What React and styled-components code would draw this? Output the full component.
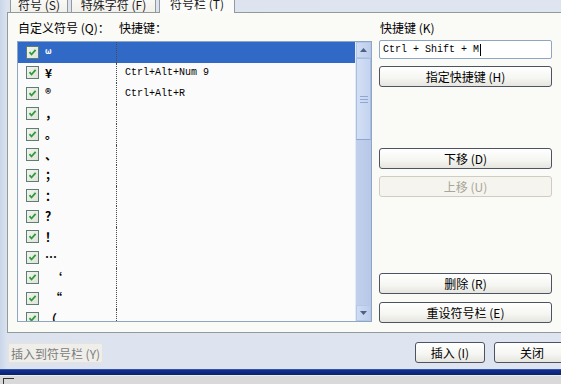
import React from 'react'
import styled, { createGlobalStyle } from 'styled-components'

const GlobalStyle = createGlobalStyle`
  html, body {
    margin: 0;
    padding: 0;
  }
  body {
    font-family: "Noto Sans CJK SC", "Liberation Sans", sans-serif;
    font-size: 12px;
    color: #000;
  }
`

const rows = [
  { sym: 'ω', small: true, key: '' },
  { sym: '¥', key: 'Ctrl+Alt+Num 9' },
  { sym: '®', key: 'Ctrl+Alt+R' },
  { sym: '，', key: '' },
  { sym: '。', key: '' },
  { sym: '、', key: '' },
  { sym: '；', key: '' },
  { sym: '：', key: '' },
  { sym: '？', key: '' },
  { sym: '！', key: '' },
  { sym: '…', key: '' },
  { sym: '‘', key: '', indent: true },
  { sym: '“', key: '', indent: true },
  { sym: '（', key: '' },
]

function Check() {
  return (
    <CheckBox>
      <svg width="9" height="9" viewBox="0 0 9 9">
        <polyline points="1.5,4.2 3.5,6.5 7.6,1.8" fill="none" stroke="#2f9b3a" strokeWidth="1.8" />
      </svg>
    </CheckBox>
  )
}

function Arrow({ down }) {
  return (
    <svg width="7" height="4" viewBox="0 0 7 4">
      <polygon points={down ? '0,0 7,0 3.5,4' : '0,4 7,4 3.5,0'} fill="#4d6185" />
    </svg>
  )
}

function App() {
  return (
    <>
      <GlobalStyle />
      <Window>
        <TabStrip>
          <Tab $w={58}>符号 (<u>S</u>)</Tab>
          <Tab $w={85}>特殊字符 (<u>F</u>)</Tab>
          <Tab $w={76} $active>符号栏 (<u>T</u>)</Tab>
        </TabStrip>

        <Panel>
          <LeftCol>
            <HeadRow>
              <HeadLabel $w={100}>自定义符号 (<u>Q</u>)：</HeadLabel>
              <HeadLabel>快捷键：</HeadLabel>
            </HeadRow>
            <ListBox>
              <Rows>
                {rows.map((r, i) => (
                  <Row key={i} $selected={i === 0}>
                    <SymCell>
                      <Check />
                      <Sym $small={r.small} $indent={r.indent}>{r.sym}</Sym>
                    </SymCell>
                    <KeyCell>{r.key}</KeyCell>
                  </Row>
                ))}
              </Rows>
              <ScrollBar>
                <ScrollBtn><Arrow /></ScrollBtn>
                <Thumb>
                  <Grip />
                  <Grip />
                  <Grip />
                </Thumb>
                <Track />
                <ScrollBtn><Arrow down /></ScrollBtn>
              </ScrollBar>
            </ListBox>
          </LeftCol>

          <RightCol>
            <HeadLabel>快捷键 (<u>K</u>)</HeadLabel>
            <KeyInput>Ctrl + Shift + M<Caret /></KeyInput>
            <Button $mt={7}>指定快捷键 (<u>H</u>)</Button>
            <Button $mt={61}>下移 (<u>D</u>)</Button>
            <Button $mt={7} $disabled>上移 (<u>U</u>)</Button>
            <Button $mt={76}>删除 (<u>R</u>)</Button>
            <Button $mt={8}>重设符号栏 (<u>E</u>)</Button>
          </RightCol>
        </Panel>

        <Footer>
          <FlatButton>插入到符号栏 (<u>Y</u>)</FlatButton>
          <FooterRight>
            <Button $w={70}>插入 (<u>I</u>)</Button>
            <Button $w={76} $cut>关闭</Button>
          </FooterRight>
        </Footer>

        <FrameBand />
        <StatusStrip>
          <StatusMark />
        </StatusStrip>
      </Window>
    </>
  )
}

const Window = styled.div`
  width: 561px;
  height: 384px;
  overflow: hidden;
  display: flex;
  flex-direction: column;
  background: linear-gradient(90deg, #c9d5ea 0px, #dce3ef 7px, #dfe5f0 100%);
`

const TabStrip = styled.div`
  height: 12px;
  display: flex;
  align-items: flex-end;
  padding-left: 10px;
  gap: 3px;
  position: relative;
  z-index: 2;
`

const Tab = styled.div`
  flex: none;
  width: ${p => p.$w}px;
  height: ${p => (p.$active ? 24 : 22)}px;
  margin-bottom: ${p => (p.$active ? -1 : 0)}px;
  box-sizing: border-box;
  border: 1px solid #919b9c;
  border-bottom: none;
  border-radius: 3px 3px 0 0;
  background: ${p => (p.$active ? '#fbfbf9' : 'linear-gradient(#ffffff, #f1f0ea)')};
  padding-top: 6px;
  line-height: 16px;
  text-align: center;
  color: #1a1a1a;
  white-space: nowrap;

  u {
    text-decoration: none;
  }
`

const Panel = styled.div`
  height: 321px;
  box-sizing: border-box;
  margin-left: 7px;
  border: 1px solid #919b9c;
  border-right: none;
  background: #fafaf7;
  padding: 8px 0 0 9px;
  display: flex;
  gap: 7px;
`

const LeftCol = styled.div`
  width: 355px;
  display: flex;
  flex-direction: column;
`

const HeadRow = styled.div`
  display: flex;
`

const HeadLabel = styled.div`
  ${p => (p.$w ? `width: ${p.$w}px;` : '')}
  line-height: 14px;
  height: 14px;
  padding-left: 1px;
  white-space: nowrap;

  u {
    text-decoration: none;
  }
`

const ListBox = styled.div`
  margin-top: 6px;
  height: 281px;
  box-sizing: border-box;
  border: 1px solid #8fa6c2;
  background: #fbfbfb;
  display: flex;
  overflow: hidden;
`

const Rows = styled.div`
  flex: 1;
  overflow: hidden;
`

const Row = styled.div`
  height: 20.5px;
  display: flex;
  background: ${p => (p.$selected ? '#3169c6' : 'transparent')};
  color: ${p => (p.$selected ? '#fff' : '#000')};
`

const SymCell = styled.div`
  width: 98px;
  display: flex;
  align-items: center;
  padding-left: 8px;
  box-sizing: border-box;
`

const CheckBox = styled.div`
  width: 13px;
  height: 13px;
  box-sizing: border-box;
  border: 1px solid #5d7f72;
  background: linear-gradient(135deg, #f2f4ef, #dfe3d9);
  display: flex;
  align-items: center;
  justify-content: center;
`

const Sym = styled.span`
  margin-left: ${p => (p.$indent ? 11 : 6)}px;
  font-weight: bold;
  font-size: ${p => (p.$small ? 8 : 12)}px;
  line-height: 12px;
  align-self: ${p => (p.$small ? 'flex-start' : 'center')};
  margin-top: ${p => (p.$small ? 3 : 0)}px;
`

const KeyCell = styled.div`
  flex: 1;
  border-left: 1px dotted #4a4a4a;
  padding-left: 8px;
  display: flex;
  align-items: center;
  font-family: "Liberation Mono", monospace;
  font-size: 10px;
  white-space: nowrap;
`

const ScrollBar = styled.div`
  width: 15px;
  flex: none;
  display: flex;
  flex-direction: column;
  background: #c3d2ee;
  border-left: 1px solid #e3e9f5;
`

const ScrollBtn = styled.div`
  height: 16px;
  flex: none;
  display: flex;
  align-items: center;
  justify-content: center;
  background: linear-gradient(90deg, #cfdcf3, #bccded);
  border: 1px solid #b5c6e6;
  box-sizing: border-box;
`

const Thumb = styled.div`
  height: 82px;
  flex: none;
  box-sizing: border-box;
  border: 1px solid #a9bde2;
  border-bottom-color: #8ea6d2;
  background: linear-gradient(90deg, #d3dff4, #c3d3f0);
  display: flex;
  flex-direction: column;
  align-items: center;
  justify-content: center;
  gap: 2px;
`

const Grip = styled.div`
  width: 8px;
  height: 1px;
  background: #90a7d3;
`

const Track = styled.div`
  flex: 1;
  background: linear-gradient(90deg, #c1d0ec, #b7c8e8);
`

const RightCol = styled.div`
  width: 173px;
  display: flex;
  flex-direction: column;
`

const KeyInput = styled.div`
  margin-top: 5px;
  height: 19px;
  box-sizing: border-box;
  border: 1px solid #8fa6c2;
  border-radius: 2px;
  background: #fff;
  font-family: "Liberation Mono", monospace;
  font-size: 10px;
  line-height: 17px;
  padding-left: 3px;
  display: flex;
  align-items: center;
  white-space: pre;
`

const Caret = styled.span`
  width: 1px;
  height: 12px;
  background: #000;
  margin-left: 1px;
`

const Button = styled.div`
  flex: none;
  margin-top: ${p => p.$mt || 0}px;
  ${p => (p.$w ? `width: ${p.$w}px;` : '')}
  ${p => (p.$cut ? 'margin-right: -9px;' : '')}
  height: 21px;
  box-sizing: border-box;
  border: 1px solid ${p => (p.$disabled ? '#cfcdc2' : '#4c5462')};
  border-radius: 3px;
  background: ${p =>
    p.$disabled
      ? '#f5f4ee'
      : 'linear-gradient(#ffffff 0%, #f5f5f1 60%, #e6e5df 100%)'};
  color: ${p => (p.$disabled ? '#a8a698' : '#000')};
  display: flex;
  align-items: center;
  justify-content: center;
  line-height: 14px;
  white-space: pre;

  u {
    text-decoration: none;
  }
`

const Footer = styled.div`
  height: 36px;
  box-sizing: border-box;
  padding: 9px 0 0 8px;
  display: flex;
  align-items: flex-start;
`

const FlatButton = styled.div`
  width: 95px;
  height: 20px;
  margin-top: 1px;
  box-sizing: border-box;
  border: 1px solid #e4e3dc;
  border-radius: 2px;
  background: #efeeea;
  color: #7d7d7a;
  display: flex;
  align-items: center;
  justify-content: center;
  white-space: pre;

  u {
    text-decoration: none;
  }
`

const FooterRight = styled.div`
  margin-left: auto;
  display: flex;
  gap: 9px;
`

const FrameBand = styled.div`
  height: 6px;
  flex: none;
  background: linear-gradient(#5472c4 0, #12308e 1px, #0a226e 100%);
`

const StatusStrip = styled.div`
  flex: 1;
  background: #d9d9d9;
  position: relative;
  border-top: 1px solid #ececec;
`

const StatusMark = styled.div`
  position: absolute;
  left: 3px;
  top: 2px;
  width: 10px;
  height: 7px;
  border-left: 1px solid #333;
  border-top: 1px solid #333;
`

export default App
